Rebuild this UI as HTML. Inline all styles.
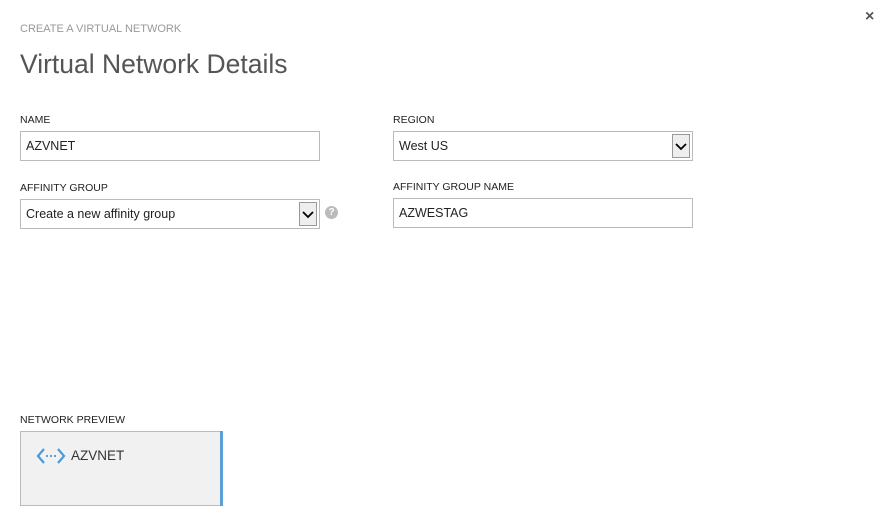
<!DOCTYPE html><html><head><style>
body{margin:0;width:884px;height:514px;background:#fff;font-family:"Liberation Sans",sans-serif;position:relative;overflow:hidden}
.a{position:absolute}
.lbl{font-size:10.5px;color:#222;letter-spacing:0}
.in{position:absolute;box-sizing:border-box;border:1px solid #bbb;background:#fff;font-size:12.5px;color:#222;padding-left:5px;line-height:28px;height:30px;width:300px}
.dd{position:absolute;right:2px;top:2px;width:18px;height:24px;box-sizing:border-box;border:1px solid #999;background:#eee}
</style></head><body>
<div class="a" style="left:20px;top:23px;font-size:11px;color:#999">CREATE A VIRTUAL NETWORK</div>
<div class="a" style="left:20px;top:49px;font-size:26.5px;color:#555;font-weight:300">Virtual Network Details</div>
<div class="a" style="left:865px;top:8px;font-size:16px;color:#555;font-weight:bold">×</div>
<div class="a lbl" style="left:20px;top:114px">NAME</div>
<div class="in" style="left:20px;top:131px">AZVNET</div>
<div class="a lbl" style="left:393px;top:114px">REGION</div>
<div class="in" style="left:393px;top:131px">West US<div class="dd"><svg width="16" height="22"><path d="M3 9l5 5 5-5" stroke="#000" stroke-width="1.8" fill="none"/></svg></div></div>
<div class="a lbl" style="left:20px;top:182px">AFFINITY GROUP</div>
<div class="in" style="left:20px;top:199px">Create a new affinity group<div class="dd"><svg width="16" height="22"><path d="M3 9l5 5 5-5" stroke="#000" stroke-width="1.8" fill="none"/></svg></div></div>
<div class="a" style="left:325px;top:206px;width:13px;height:13px;border-radius:50%;background:#bbb;color:#fff;font-size:10px;font-weight:bold;text-align:center;line-height:13px">?</div>
<div class="a lbl" style="left:393px;top:181px">AFFINITY GROUP NAME</div>
<div class="in" style="left:393px;top:198px">AZWESTAG</div>
<div class="a lbl" style="left:20px;top:414px">NETWORK PREVIEW</div>
<div class="a" style="left:20px;top:431px;width:200px;height:75px;box-sizing:border-box;border:1px solid #bbb;border-right:none;background:#f1f1f1"></div>
<div class="a" style="left:220px;top:431px;width:3px;height:75px;background:#5ba0d9"></div>
<svg class="a" style="left:36px;top:447px" width="30" height="18"><path d="M8 2L2 9l6 7M22 2l6 7-6 7" stroke="#4a9ad8" stroke-width="2.2" fill="none"/><circle cx="11" cy="9" r="1.1" fill="#4a9ad8"/><circle cx="15" cy="9" r="1.1" fill="#4a9ad8"/><circle cx="19" cy="9" r="1.1" fill="#4a9ad8"/></svg>
<div class="a" style="left:71px;top:448px;font-size:13.5px;color:#333">AZVNET</div>
</body></html>
